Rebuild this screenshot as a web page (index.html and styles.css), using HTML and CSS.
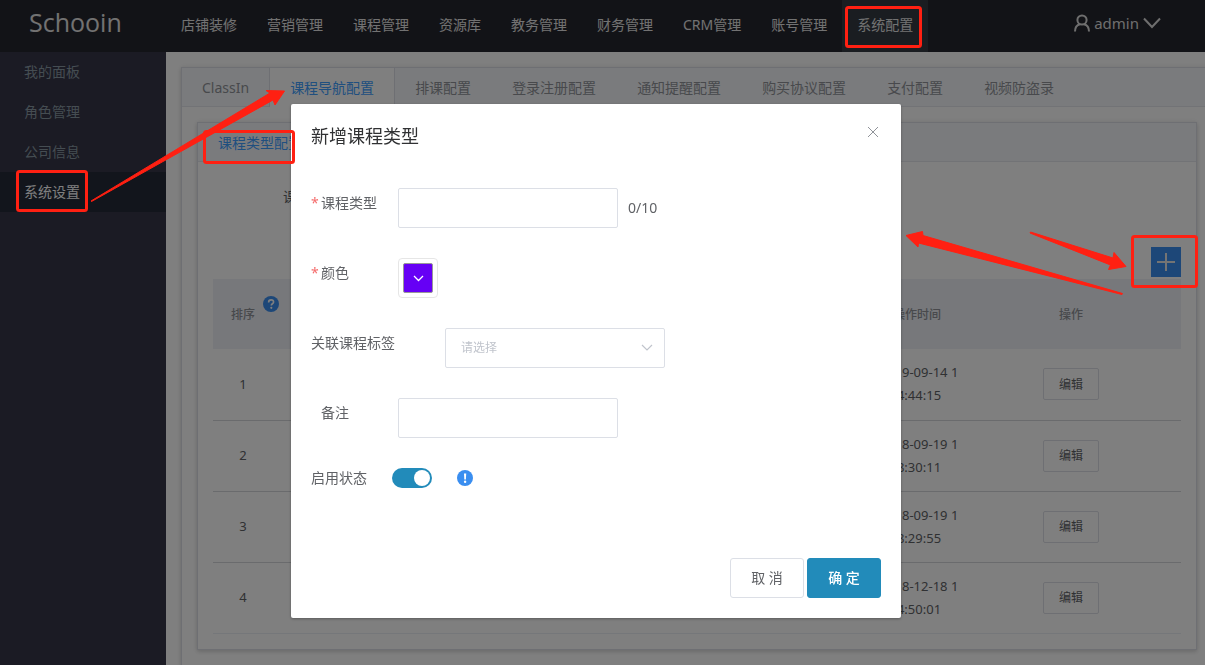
FILE: index.html
```html
<!DOCTYPE html>
<html lang="zh-CN">
<head>
<meta charset="utf-8">
<title>Schooin</title>
<link rel="stylesheet" href="styles.css">
</head>
<body>
<div class="app">
  <header class="topbar">
    <div class="brand">Schooin</div>
    <nav class="topnav">
      <a href="#">店铺装修</a><a href="#">营销管理</a><a href="#">课程管理</a><a href="#">资源库</a><a href="#">教务管理</a><a href="#">财务管理</a><a href="#">CRM管理</a><a href="#">账号管理</a><a href="#" class="is-active">系统配置</a>
    </nav>
    <button class="user" type="button">
      <svg width="16" height="18" viewBox="0 0 16 18" fill="none" stroke="currentColor" stroke-width="2"><circle cx="8" cy="6" r="4.600"/><path d="M1 17.500c0-4 2.200-6.500 5-7.200M15 17.500c0-4-2.200-6.500-5-7.200"/></svg>
      <span>admin</span>
      <svg width="18" height="12" viewBox="0 0 18 12" fill="none" stroke="currentColor" stroke-width="2"><path d="M1 1.500l8 8.500 8-8.500"/></svg>
    </button>
  </header>
  <div class="body">
    <nav class="sidebar">
      <a href="#">我的面板</a>
      <a href="#">角色管理</a>
      <a href="#">公司信息</a>
      <a href="#" class="is-active">系统设置</a>
    </nav>
    <main class="main">
      <section class="card card-outer">
        <div class="tabs">
          <a href="#">ClassIn</a><a href="#" class="is-active">课程导航配置</a><a href="#">排课配置</a><a href="#">登录注册配置</a><a href="#">通知提醒配置</a><a href="#">购买协议配置</a><a href="#">支付配置</a><a href="#">视频防盗录</a>
        </div>
        <div class="card-outer-body">
          <section class="card">
            <div class="tabs"><a href="#" class="is-active">课程类型配置</a></div>
            <div class="panel">
              <div class="filter">课</div>
              <div class="toolbar">
                <button class="add" type="button" aria-label="新增">
                  <svg width="20" height="20" viewBox="0 0 20 20" stroke="currentColor" stroke-width="2"><path d="M10 1v18M1 10h18"/></svg>
                </button>
              </div>
              <table class="grid">
                <colgroup><col class="col-order"><col><col class="col-time"><col class="col-action"></colgroup>
                <thead>
                  <tr>
                    <th><span class="order-head">排序<svg class="help" width="16" height="16" viewBox="0 0 16 16"><circle cx="8" cy="8" r="8" fill="#3a8ef0"/><path d="M5.600 6.400c0-1.500 1-2.500 2.500-2.500s2.500.9 2.500 2.200c0 1.600-2.300 1.700-2.300 3.300" fill="none" stroke="#fff" stroke-width="1.600"/><circle cx="8.300" cy="11.800" r="1.100" fill="#fff"/></svg></span></th>
                    <th></th><th>操作时间</th><th>操作</th>
                  </tr>
                </thead>
                <tbody>
                  <tr><td>1</td><td></td><td class="time">2019-09-14 1<br>4:44:15</td><td><button class="edit" type="button">编辑</button></td></tr>
                  <tr><td>2</td><td></td><td class="time">2018-09-19 1<br>8:30:11</td><td><button class="edit" type="button">编辑</button></td></tr>
                  <tr><td>3</td><td></td><td class="time">2018-09-19 1<br>8:29:55</td><td><button class="edit" type="button">编辑</button></td></tr>
                  <tr><td>4</td><td></td><td class="time">2018-12-18 1<br>4:50:01</td><td><button class="edit" type="button">编辑</button></td></tr>
                </tbody>
              </table>
            </div>
          </section>
        </div>
      </section>
    </main>
  </div>
</div>

<div class="overlay">
  <form class="dialog" role="dialog" aria-labelledby="dialog-title">
    <div class="dialog-head">
      <h2 id="dialog-title">新增课程类型</h2>
      <button class="close" type="button" aria-label="关闭"><svg width="12" height="12" viewBox="0 0 12 12" stroke="currentColor"><path d="M1 1l10 10M11 1L1 11"/></svg></button>
    </div>
    <div class="fields">
      <div class="field">
        <label class="required" for="type">课程类型</label>
        <input class="control" id="type" type="text" maxlength="10">
        <span class="counter">0/10</span>
      </div>
      <div class="field">
        <label class="required" for="color">颜色</label>
        <button class="color" id="color" type="button"><span class="swatch"><svg width="11" height="7" viewBox="0 0 11 7" fill="none" stroke="#fff" stroke-width="1.300"><path d="M1 1l4.500 4.500L10 1"/></svg></span></button>
      </div>
      <div class="field field-wide">
        <label for="tag">关联课程标签</label>
        <div class="select">
          <select class="control" id="tag"><option>请选择</option></select>
          <svg width="12" height="7" viewBox="0 0 12 7" fill="none" stroke="#c0c4cc" stroke-width="1.200"><path d="M1 1l5 5 5-5"/></svg>
        </div>
      </div>
      <div class="field">
        <label class="indent" for="note">备注</label>
        <input class="control" id="note" type="text">
      </div>
      <div class="field field-switch">
        <label for="enabled">启用状态</label>
        <input class="switch" id="enabled" type="checkbox" checked>
        <svg width="16" height="16" viewBox="0 0 16 16"><circle cx="8" cy="8" r="8" fill="#3a8ef0"/><path d="M7 3.500h2.200L8.900 9.500H7.300z" fill="#fff"/><circle cx="8.100" cy="11.800" r="1.200" fill="#fff"/></svg>
      </div>
    </div>
    <div class="dialog-foot">
      <button class="btn" type="button">取 消</button>
      <button class="btn btn-primary" type="submit">确 定</button>
    </div>
  </form>
</div>

<svg class="marks" width="1205" height="665" viewBox="0 0 1205 665" aria-hidden="true">
  <g fill="none" stroke="#ff2012" stroke-width="3">
    <rect x="846.500" y="7.500" width="74" height="39" rx="2"/>
    <rect x="17.500" y="171.500" width="69" height="39" rx="2"/>
    <rect x="204.500" y="131.500" width="89" height="31" rx="2"/>
    <rect x="1132.500" y="236.500" width="64" height="50" rx="2"/>
  </g>
  <g fill="#ff2012" stroke="#ff2012" stroke-width="1" stroke-linejoin="round">
    <path d="M91 201L270 93 266 90.500 284.500 91 275 105 273 100 91.500 201.500z"/>
    <path d="M1122.500 293.500L923 235.500 922.500 231.500 906 235.500 918 247 918.500 243 1122 294.500z"/>
    <path d="M1030.500 232L1113 258 1114 252.500 1126 266.500 1108.500 269.500 1110.500 265 1030 233z"/>
  </g>
</svg>
</body>
</html>
```
FILE: styles.css
```css
* { box-sizing: border-box; }

body {
  margin: 0;
  font: 14px/20px "Noto Sans", "Noto Sans CJK SC", sans-serif;
  color: #606266;
  background: #fff;
  overflow: hidden;
}

a { color: inherit; text-decoration: none; }
button, input, select { font: inherit; color: inherit; margin: 0; }
button { cursor: pointer; padding: 0; border: 0; background: none; }

.app { display: flex; flex-direction: column; min-height: 100vh; }

.topbar { display: flex; height: 52px; background: #24262e; color: #fff; }
.brand {
  flex: none;
  width: 166px;
  padding-left: 29px;
  font-family: "Open Sans", sans-serif;
  font-size: 25px;
  line-height: 44px;
  color: #e4e4e4;
}
.topnav { display: flex; flex: 1; white-space: nowrap; }
.topnav a { padding: 0 15px; line-height: 50px; color: #e4e4e4; }
.topnav .is-active { background: #343a42; }
.user {
  display: flex;
  align-items: center;
  gap: 4px;
  height: 46px;
  margin-right: 44px;
  font-size: 15px;
  color: #ddd;
}

.body { display: flex; flex: 1; }
.sidebar { flex: none; width: 166px; background: #363648; }
.sidebar a { display: block; padding-left: 24px; line-height: 40px; color: #8a9aa4; }
.sidebar .is-active { background: #242a38; color: #fff; }

.main { flex: 1; min-width: 0; padding: 15px 0 0 15px; overflow: hidden; }

.card {
  border: 1px solid #dcdfe6;
  background: #fff;
  box-shadow: 0 2px 4px rgba(0, 0, 0, .12), 0 0 6px rgba(0, 0, 0, .08);
}
.card-outer { margin-right: -8px; }
.card-outer-body { padding: 15px; }
.tabs {
  display: flex;
  height: 39px;
  background: #f5f7fa;
  border-bottom: 1px solid #e4e7ed;
  white-space: nowrap;
}
.tabs a {
  height: 39px;
  padding: 0 20px;
  border: solid transparent;
  border-width: 0 1px 0 0;
  line-height: 40px;
  color: #909399;
}
.tabs .is-active {
  background: #fff;
  color: #409eff;
  border-color: #dcdfe6;
}
.card .card .tabs .is-active { background: none; border-color: transparent; }
.tabs a:not(.is-active):has(+ .is-active) { border-color: #dcdfe6; }

.panel { padding: 15px; }
.filter { padding-left: 70px; line-height: 40px; }
.toolbar { display: flex; justify-content: flex-end; padding: 30px 0 2px; }
.add {
  display: grid;
  place-items: center;
  width: 30px;
  height: 30px;
  background: #3a8ef0;
  color: #e8e8e8;
}

.grid {
  width: 100%;
  table-layout: fixed;
  border-collapse: collapse;
  font-size: 13px;
  line-height: 23px;
  text-align: center;
}
.grid th { height: 70px; padding: 0; background: #eef1f6; font-size: 12px; font-weight: 500; color: #909399; }
.grid td { height: 71px; padding: 0; border-bottom: 1px solid #d4d6da; }
.grid tr:last-child td { border-color: #ebeef5; }
.grid .time { padding-left: 4px; white-space: nowrap; }
.col-order { width: 60px; }
.col-time { width: 88px; }
.col-action { width: 220px; }
.order-head { position: relative; }
.help { position: absolute; left: 32px; top: -10px; }
.edit {
  width: 56px;
  height: 32px;
  border: 1px solid #dcdfe6;
  border-radius: 2px;
  font-size: 12px;
}

.overlay {
  position: fixed;
  inset: 0;
  display: flex;
  justify-content: center;
  align-items: flex-start;
  padding: 104px 13px 0 0;
  background: rgba(0, 0, 0, .5);
}
.dialog {
  width: 610px;
  padding: 20px;
  border-radius: 2px;
  background: #fff;
  box-shadow: 0 1px 3px rgba(0, 0, 0, .3);
}
.dialog-head { display: flex; justify-content: space-between; align-items: flex-start; }
.dialog-head h2 { margin: 0; font-size: 18px; font-weight: 400; line-height: 24px; color: #303133; }
.close { display: grid; width: 16px; height: 16px; place-items: center; color: #909399; }

.fields { display: flex; flex-direction: column; gap: 30px; padding-top: 40px; }
.field { display: flex; align-items: flex-start; }
.field label { flex: none; width: 87px; line-height: 30px; }
.field-wide label { width: 134px; }
.required::before { content: "*"; display: inline-block; width: 10px; color: #f56c6c; }
.field .indent { padding-left: 10px; }
.control {
  display: block;
  width: 220px;
  height: 40px;
  padding: 0 15px;
  border: 1px solid #dcdfe6;
  border-radius: 2px;
  background: #fff;
  outline: 0;
}
.counter { padding-left: 10px; line-height: 40px; }
.color {
  width: 40px;
  height: 40px;
  padding: 4px;
  border: 1px solid #e6e6e6;
  border-radius: 4px;
}
.swatch {
  display: grid;
  place-items: center;
  height: 30px;
  border: 1px solid #999;
  border-radius: 2px;
  background: #6600f5;
}
.select { position: relative; }
.select .control { appearance: none; font-size: 12px; color: #c0c4cc; }
.select svg { position: absolute; right: 12px; top: 16px; pointer-events: none; }

.field-switch { align-items: center; height: 20px; }
.field-switch label { width: 81px; }
.field-switch svg { margin-left: 25px; }
.switch {
  appearance: none;
  width: 40px;
  height: 20px;
  padding: 2px;
  border-radius: 10px;
  background: #228bba;
}
.switch::before {
  content: "";
  display: block;
  width: 16px;
  height: 16px;
  margin-left: auto;
  border-radius: 50%;
  background: #fff;
}

.dialog-foot { display: flex; justify-content: flex-end; gap: 3px; padding-top: 70px; }
.btn {
  width: 74px;
  height: 40px;
  border: 1px solid #dcdfe6;
  border-radius: 3px;
  background: #fff;
}
.btn-primary { border-color: #228bba; background: #228bba; color: #fff; font-weight: 500; }

.marks { position: absolute; left: 0; top: 0; pointer-events: none; }
```
